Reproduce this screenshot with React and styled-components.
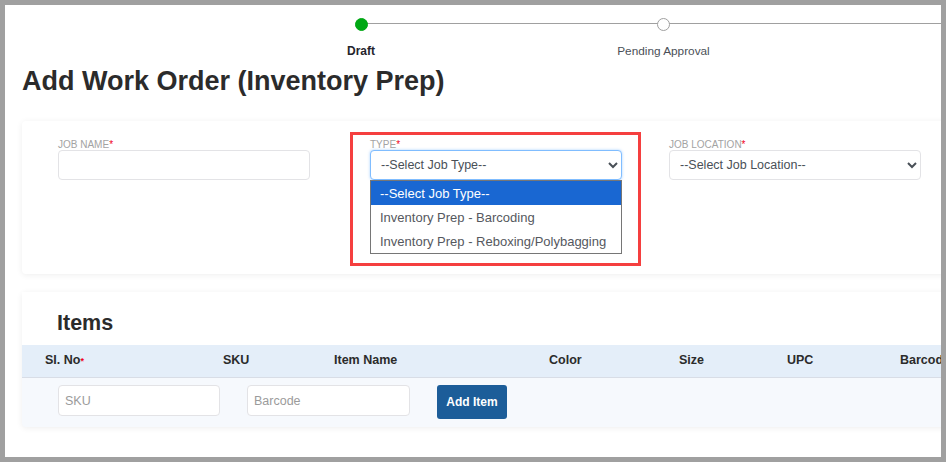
import React from "react";
import styled, { createGlobalStyle } from "styled-components";

const Global = createGlobalStyle`
  html, body { margin: 0; padding: 0; background: #fff; }
  body { font-family: "Liberation Sans", Arial, sans-serif; color: #2b2b2b; }
  * { box-sizing: border-box; }
`;

const Frame = styled.div`
  width: 946px;
  height: 462px;
  border: 5px solid #a0a0a0;
  background: #fff;
  overflow: hidden;
  padding-left: 17px;
`;

const Stepper = styled.div`
  display: flex;
  height: 58px;
  padding: 13px 0 0 188px;
`;

const Step = styled.div`
  flex: 0 0 302px;
  position: relative;
  display: flex;
  flex-direction: column;
  align-items: center;
  &::before {
    content: "";
    position: absolute;
    left: 50%;
    top: 5px;
    width: 100%;
    height: 1px;
    background: #a0a0a0;
  }
`;

const Dot = styled.span`
  position: relative;
  z-index: 1;
  width: 13px;
  height: 13px;
  border-radius: 50%;
  background: ${(p) => (p.$active ? "#00a814" : "#fff")};
  border: 1px solid ${(p) => (p.$active ? "#00a814" : "#a0a0a0")};
`;

const StepLabel = styled.span`
  margin-top: 13px;
  padding-left: ${(p) => (p.$active ? 0 : 1)}px;
  font-size: ${(p) => (p.$active ? 12 : 11.8)}px;
  line-height: 14px;
  color: ${(p) => (p.$active ? "#24242c" : "#4a4f57")};
  font-weight: ${(p) => (p.$active ? 700 : 400)};
`;

const Title = styled.h1`
  margin: 1px 0 23px;
  height: 34px;
  font-size: 27px;
  line-height: 34px;
  font-weight: 700;
  color: #2b2b2b;
  white-space: nowrap;
`;

const Card = styled.section`
  width: 960px;
  background: #fff;
  border-radius: 4px;
  box-shadow: 0 1px 6px rgba(0, 0, 0, 0.07);
`;

const FormCard = styled(Card)`
  height: 153px;
  margin-bottom: 18px;
  padding: 17px 0 0 36px;
  display: flex;
`;

const Field = styled.div`
  position: relative;
  width: 252px;
  margin-right: ${(p) => p.$gap}px;
  display: flex;
  flex-direction: column;
`;

const Label = styled.label`
  padding-top: 1px;
  font-size: 10px;
  line-height: 11px;
  color: #a3a3a3;
  text-transform: uppercase;
  & > b {
    color: #f00020;
    font-weight: 400;
  }
`;

const TextInput = styled.input`
  height: 30px;
  width: 100%;
  border: 1px solid #e3e3e6;
  border-radius: 4px;
  background: #fff;
  outline: none;
`;

const Select = styled.select`
  height: 30px;
  width: 100%;
  padding: 0 6px;
  font: 12.5px "Liberation Sans", Arial, sans-serif;
  color: #495057;
  background: #fff;
  border: 1px solid ${(p) => (p.$focus ? "#80bdff" : "#e3e3e6")};
  border-radius: 4px;
  outline: none;
  box-shadow: ${(p) => (p.$focus ? "0 0 3px rgba(0,123,255,.35)" : "none")};
`;

const OptionList = styled.ul`
  position: absolute;
  z-index: 3;
  top: 42px;
  left: 0;
  width: 252px;
  margin: 0;
  padding: 0;
  list-style: none;
  background: #fff;
  border: 1px solid #767676;
`;

const OptionRow = styled.li`
  height: 24px;
  line-height: 26px;
  padding-left: 9px;
  font-size: 13px;
  white-space: nowrap;
  color: ${(p) => (p.$selected ? "#fff" : "#55585e")};
  background: ${(p) => (p.$selected ? "#1967d2" : "#fff")};
`;

const Highlight = styled.div`
  position: absolute;
  z-index: 4;
  top: -6px;
  left: -20px;
  width: 291px;
  height: 134px;
  border: 3px solid #f53f3f;
  pointer-events: none;
`;

const ItemsCard = styled(Card)`
  height: 135px;
  display: flex;
  flex-direction: column;
  background: #f6f9fd;
`;

const ItemsHeading = styled.div`
  height: 53px;
  padding-left: 35px;
  background: #fff;
  font-size: 21.5px;
  line-height: 62px;
  font-weight: 700;
  color: #2b2b2b;
`;

const HeaderRow = styled.div`
  height: 33px;
  display: grid;
  grid-template-columns: 178px 111px 215px 130px 108px 113px 80px;
  padding-left: 23px;
  padding-bottom: 2px;
  align-items: center;
  background: #e4eef9;
  border-bottom: 1px solid #d8dde6;
  font-size: 12.5px;
  font-weight: 700;
  color: #2b2b2b;
  & b {
    color: #f00020;
    font-size: 9px;
  }
`;

const AddRow = styled.div`
  display: flex;
  align-items: flex-start;
  padding: 7px 0 0 36px;
`;

const ItemInput = styled.input`
  height: 31px;
  width: ${(p) => p.$w}px;
  margin-right: ${(p) => p.$gap}px;
  padding: 0 6px;
  font: 12.5px "Liberation Sans", Arial, sans-serif;
  background: #fff;
  border: 1px solid #e3e3e6;
  border-radius: 4px;
  outline: none;
  &::placeholder {
    color: #9b9b9b;
    opacity: 1;
  }
`;

const AddButton = styled.button`
  width: 70px;
  height: 34px;
  padding: 0 0 1px;
  border: 0;
  border-radius: 3px;
  background: #1c5d99;
  color: #fff;
  font: 700 12px "Liberation Sans", Arial, sans-serif;
`;

const columns = ["SI. No", "SKU", "Item Name", "Color", "Size", "UPC", "Barcode"];
const options = ["--Select Job Type--", "Inventory Prep - Barcoding", "Inventory Prep - Reboxing/Polybagging"];

export default function App() {
  return (
    <Frame>
      <Global />
      <Stepper>
        <Step>
          <Dot $active />
          <StepLabel $active>Draft</StepLabel>
        </Step>
        <Step>
          <Dot />
          <StepLabel>Pending Approval</StepLabel>
        </Step>
      </Stepper>
      <Title>Add Work Order (Inventory Prep)</Title>
      <FormCard>
        <Field $gap={60}>
          <Label>Job Name<b>*</b></Label>
          <TextInput />
        </Field>
        <Field $gap={47}>
          <Label>Type<b>*</b></Label>
          <Select $focus defaultValue="">
            <option value="">--Select Job Type--</option>
          </Select>
          <OptionList>
            {options.map((o, i) => (
              <OptionRow key={o} $selected={i === 0}>{o}</OptionRow>
            ))}
          </OptionList>
          <Highlight />
        </Field>
        <Field $gap={0}>
          <Label>Job Location<b>*</b></Label>
          <Select defaultValue="">
            <option value="">--Select Job Location--</option>
          </Select>
        </Field>
      </FormCard>
      <ItemsCard>
        <ItemsHeading>Items</ItemsHeading>
        <HeaderRow>
          {columns.map((c, i) => (
            <span key={c}>{c}{i === 0 && <b>*</b>}</span>
          ))}
        </HeaderRow>
        <AddRow>
          <ItemInput placeholder="SKU" $w={162} $gap={27} />
          <ItemInput placeholder="Barcode" $w={163} $gap={27} />
          <AddButton>Add Item</AddButton>
        </AddRow>
      </ItemsCard>
    </Frame>
  );
}
